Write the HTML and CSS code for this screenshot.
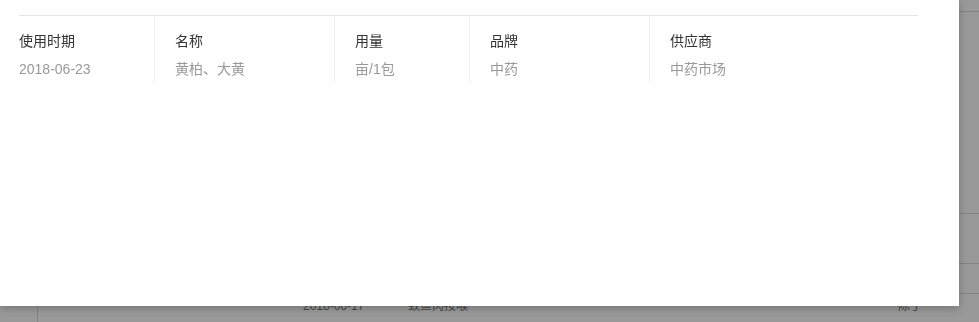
FILE: index.html
```html
<!DOCTYPE html>
<html lang="zh-CN">
<head>
    <meta charset="UTF-8">
    <meta name="viewport" content="width=device-width, initial-scale=1.0">
    <title>使用记录</title>
    <link rel="stylesheet" href="styles.css">
</head>
<body>
    <div class="page">
        <div class="row row-top"></div>
        <div class="row row-big"></div>
        <div class="row row-mid"></div>
        <div class="row row-small"></div>
        <div class="row row-data">
            <div class="cell cell-pad"></div>
            <div class="cell cell-date">2018-06-17</div>
            <div class="cell cell-name">致鱼肉按喉</div>
            <div class="cell cell-person">陈丁</div>
        </div>
    </div>

    <div class="mask"></div>

    <div class="modal">
        <div class="detail">
            <div class="detail-item col-date">
                <div class="label">使用时期</div>
                <div class="value">2018-06-23</div>
            </div>
            <div class="detail-item col-wide">
                <div class="label">名称</div>
                <div class="value">黄柏、大黄</div>
            </div>
            <div class="detail-item col-narrow">
                <div class="label">用量</div>
                <div class="value">亩/1包</div>
            </div>
            <div class="detail-item col-wide">
                <div class="label">品牌</div>
                <div class="value">中药</div>
            </div>
            <div class="detail-item col-rest">
                <div class="label">供应商</div>
                <div class="value">中药市场</div>
            </div>
        </div>
    </div>
</body>
</html>
```

FILE: styles.css
```css
* {
    box-sizing: border-box;
}

body {
    margin: 0;
    height: 100vh;
    overflow: hidden;
    font-family: "Liberation Sans", "Noto Sans CJK SC", sans-serif;
    font-size: 14px;
    color: #333;
    background-color: #fff;
}

/* page behind the dialog */
.page {
    margin-left: 37px;
    height: 100vh;
    border-left: 1px solid #ddd;
}

.row {
    border-bottom: 1px solid #ddd;
}

.row-top {
    height: 12px;
}

.row-big {
    height: 202px;
}

.row-mid {
    height: 50px;
}

.row-small {
    height: 30px;
}

.row-data {
    display: flex;
    align-items: flex-start;
    height: 32px;
    padding-top: 4px;
    font-size: 12px;
    line-height: 16px;
    color: #777;
}

.cell-pad {
    width: 265px;
}

.cell-date {
    width: 105px;
}

.cell-name {
    flex: 1;
}

.cell-person {
    width: 81px;
}

.mask {
    position: fixed;
    inset: 0;
    background-color: rgba(0, 0, 0, .4);
}

/* dialog */
.modal {
    position: absolute;
    top: 0;
    left: 0;
    width: 959px;
    height: 306px;
    padding: 15px 41px 0 19px;
    background-color: #fff;
    box-shadow: 0 2px 8px rgba(0, 0, 0, .25);
}

.detail {
    display: flex;
    border-top: 1px solid #e4e4e4;
}

.detail-item {
    padding: 15px 20px 3px;
    border-left: 1px solid #eee;
    line-height: 20px;
}

.detail-item.col-date {
    width: 135px;
    padding-left: 0;
    border-left: none;
}

.detail-item.col-wide {
    width: 180px;
}

.detail-item.col-narrow {
    width: 135px;
}

.detail-item.col-rest {
    flex: 1;
}

.label {
    color: #333;
}

.value {
    margin-top: 8px;
    color: #999;
}
```
